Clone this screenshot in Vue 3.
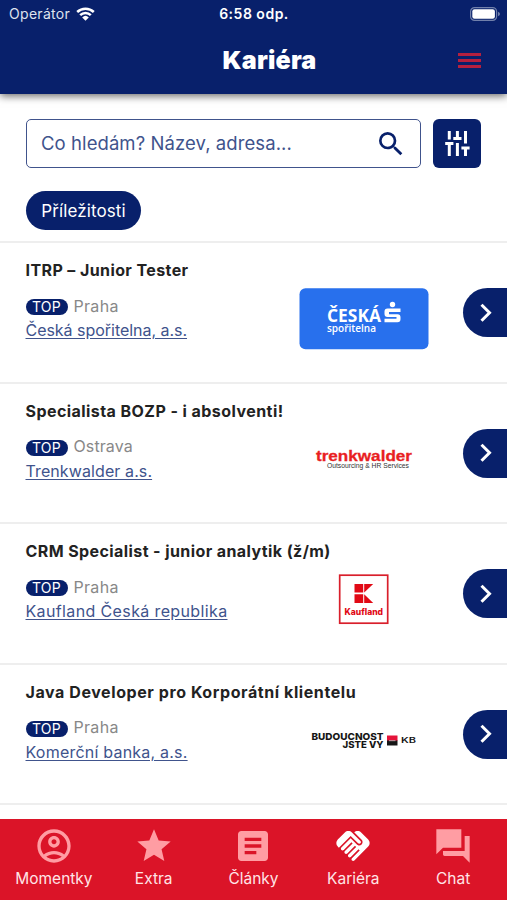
<script setup>
const jobs = [
  { title: 'ITRP – Junior Tester', ts: 0.4, city: 'Praha', cs: 0.3, company: 'Česká spořitelna, a.s.', ls: -0.03, logo: 'cs' },
  { title: 'Specialista BOZP - i absolventi!', ts: 0.44, city: 'Ostrava', cs: 0.1, company: 'Trenkwalder a.s.', ls: 0.1, logo: 'tw' },
  { title: 'CRM Specialist - junior analytik (ž/m)', ts: 0.41, city: 'Praha', cs: 0.3, company: 'Kaufland Česká republika', ls: 0.37, logo: 'kl' },
  { title: 'Java Developer pro Korporátní klientelu', ts: 0.58, city: 'Praha', cs: 0.3, company: 'Komerční banka, a.s.', ls: 0.22, logo: 'kb' },
]

const tabs = [
  { label: 'Momentky', icon: 'M12 2C6.48 2 2 6.48 2 12s4.48 10 10 10 10-4.48 10-10S17.52 2 12 2zM7.35 18.5C8.66 17.56 10.26 17 12 17s3.34.56 4.65 1.5C15.34 19.44 13.74 20 12 20s-3.34-.56-4.65-1.5zm10.79-1.38C16.45 15.8 14.32 15 12 15s-4.45.8-6.14 2.12C4.7 15.73 4 13.95 4 12c0-4.42 3.58-8 8-8s8 3.58 8 8c0 1.95-.7 3.73-1.86 5.12zM12 6c-1.93 0-3.5 1.57-3.5 3.5S10.07 13 12 13s3.5-1.57 3.5-3.5S13.93 6 12 6zm0 5c-.83 0-1.5-.67-1.5-1.5S11.17 8 12 8s1.5.67 1.5 1.5S12.83 11 12 11z' },
  { label: 'Extra', icon: 'M12 17.27 18.18 21l-1.64-7.03L22 9.24l-7.19-.61L12 2 9.19 8.63 2 9.24l5.46 4.73L5.82 21z' },
  { label: 'Články', icon: 'M19 3H5c-1.1 0-2 .9-2 2v14c0 1.1.9 2 2 2h14c1.1 0 2-.9 2-2V5c0-1.1-.9-2-2-2zm-5 14H7v-2h7v2zm3-4H7v-2h10v2zm0-4H7V7h10v2z' },
  { label: 'Kariéra', active: true, icon: 'M16.48 10.41c-.39.39-1.04.39-1.43 0l-4.47-4.46-7.05 7.04-.66-.63c-1.17-1.17-1.17-3.07 0-4.24l4.24-4.24c1.17-1.17 3.07-1.17 4.24 0L16.48 9c.39.39.39 1.02 0 1.41zM17.18 8.29c.78.78.78 2.05 0 2.83-1.27 1.27-2.61.22-2.83 0l-3.76-3.76-5.57 5.57c-.39.39-.39 1.02 0 1.41.39.39 1.02.39 1.42 0l4.62-4.62.71.71-4.62 4.62c-.39.39-.39 1.02 0 1.41.39.39 1.02.39 1.42 0l4.62-4.62.71.71-4.62 4.62c-.39.39-.39 1.02 0 1.41.39.39 1.02.39 1.41 0l4.62-4.62.71.71-4.62 4.62c-.39.39-.39 1.02 0 1.41.39.39 1.02.39 1.41 0l8.32-8.34c1.17-1.17 1.17-3.07 0-4.24l-4.24-4.24c-1.15-1.15-3.01-1.17-4.18-.06l4.47 4.47z' },
  { label: 'Chat', icon: 'M22 6h-3v9H6v2c0 .55.45 1 1 1h11l4 4V6zM17 2H2v15l4-4h11V2z' },
]
</script>

<template>
  <div class="screen">
    <header class="header">
      <div class="status">
        <div class="carrier">
          <span>Operátor</span>
          <svg width="19" height="14" viewBox="0 0 19 14" fill="none" stroke="#fff" stroke-width="2.5">
            <path d="M1.2 5a12 12 0 0 1 16.6 0M4.2 8.2a7.6 7.6 0 0 1 10.6 0" />
            <path d="M6.2 10.4a4.8 4.8 0 0 1 6.6 0L9.5 13.8z" fill="#fff" stroke="none" />
          </svg>
        </div>
        <div class="clock">6:58 odp.</div>
        <svg class="battery" width="31" height="14" viewBox="0 0 31 14">
          <rect x=".6" y=".6" width="26" height="12.8" rx="4" fill="none" stroke="#7180ab" stroke-width="1.2" />
          <rect x="2.3" y="2.3" width="22.6" height="9.4" rx="2.2" fill="#fff" />
          <path d="M28 4.8q2 .7 2 2.2t-2 2.2z" fill="#7180ab" />
        </svg>
      </div>
      <div class="titlebar">
        <h1>Kariéra</h1>
        <button class="menu"><i /><i /><i /></button>
      </div>
    </header>

    <section class="filters">
      <div class="searchrow">
        <div class="search">
          <span>Co hledám? Název, adresa...</span>
          <svg width="32" height="32" viewBox="0 0 24 24"><path fill="#08206b" d="M15.5 14h-.79l-.28-.27A6.47 6.47 0 0 0 16 9.5 6.5 6.5 0 1 0 9.5 16c1.61 0 3.09-.59 4.23-1.57l.27.28v.79l5 4.99L20.49 19zm-6 0a4.5 4.5 0 1 1 0-9 4.5 4.5 0 0 1 0 9z" /></svg>
        </div>
        <button class="tune">
          <svg width="25" height="25" viewBox="0 0 25 25" fill="none" stroke="#fff" stroke-width="3">
            <path d="M4.3 0v8.5M.2 12.5h8.2M4.3 12v13M12.4 0v8M8.3 7.5h8.2M12.4 12v13M20.5 0v12.5M16.4 17h8.2M20.5 17v8" />
          </svg>
        </button>
      </div>
      <span class="chip">Příležitosti</span>
    </section>

    <main class="jobs">
      <article v-for="job in jobs" :key="job.title" class="job">
        <h2 :style="{ letterSpacing: job.ts + 'px' }">{{ job.title }}</h2>
        <div class="body">
          <div class="info">
            <div class="place"><span class="top">TOP</span><span :style="{ letterSpacing: job.cs + 'px' }">{{ job.city }}</span></div>
            <a :style="{ letterSpacing: job.ls + 'px' }">{{ job.company }}</a>
          </div>
          <svg class="logo" width="130" height="62" viewBox="0 0 130 62">
            <g v-if="job.logo === 'cs'" fill="#fff">
              <rect x=".5" y=".2" width="129" height="61" rx="6" fill="#2870ed" />
              <text x="28" y="34" class="open" font-size="18" font-weight="700" textLength="54" lengthAdjust="spacingAndGlyphs">ČESKÁ</text>
              <text x="28" y="44.300" class="open" font-size="10.5" font-weight="600" textLength="49" lengthAdjust="spacingAndGlyphs">spořitelna</text>
              <circle cx="93.500" cy="16.500" r="2.700" />
              <path d="M88.500 20.500h13v3.500H90v2.200h8.500q3 0 3 3v2q0 3-3 3H85.500V30.700h12v-1.700h-9q-3 0-3-3v-2.500q0-3 3-3z" />
            </g>
            <g v-else-if="job.logo === 'tw'">
              <text x="17" y="31.500" class="lib" font-size="15.500" font-weight="700" fill="#e91e22" stroke="#e91e22" stroke-width=".3" textLength="96" lengthAdjust="spacingAndGlyphs">trenkwalder</text>
              <text x="28" y="38.500" class="lib" font-size="6.5" fill="#333" textLength="82" lengthAdjust="spacingAndGlyphs">Outsourcing &amp; HR Services</text>
            </g>
            <g v-else-if="job.logo === 'kl'" fill="#e10915">
              <rect x="40.700" y="6.200" width="48" height="48" fill="#fff" stroke="#d91f2b" stroke-width="1.700" />
              <path d="M55.500 15h8.700v8.500h-8.700zM65.200 15h9l-9 8.500zM55.500 25.300h8.700v8.700h-8.700zM65.200 25.300l9 8.700h-9z" />
              <text x="45.500" y="46" class="inter" font-size="8.500" font-weight="800" textLength="38.500" lengthAdjust="spacingAndGlyphs">Kaufland</text>
            </g>
            <g v-else fill="#161616">
              <text x="12.500" y="29.500" class="inter" font-size="9.500" font-weight="800" textLength="72" lengthAdjust="spacingAndGlyphs">BUDOUCNOST</text>
              <text x="43.500" y="38" class="inter" font-size="9.500" font-weight="800" textLength="41" lengthAdjust="spacingAndGlyphs">JSTE VY</text>
              <path d="M88 25.500h10.500v5.500H88z" fill="#e5143a" />
              <path d="M88 30.500h10.500v5H88z" />
              <path d="M90 30.700h6.500" stroke="#fff" stroke-width=".6" />
              <text x="102" y="32.800" class="inter" font-size="7" font-weight="600" textLength="15" lengthAdjust="spacingAndGlyphs">KB</text>
            </g>
          </svg>
          <button class="go">
            <svg width="12" height="20" viewBox="0 0 12 20" fill="none" stroke="#fff" stroke-width="3"><path d="M1.500 1.700l8 8-8 8" /></svg>
          </button>
        </div>
      </article>
    </main>

    <nav class="tabs">
      <div v-for="tab in tabs" :key="tab.label" class="tab" :class="{ active: tab.active }">
        <svg width="40" height="40" viewBox="0 0 24 24"><path :d="tab.icon" /></svg>
        <span>{{ tab.label }}</span>
      </div>
    </nav>
  </div>
</template>

<style>
body { margin: 0; overflow: hidden; }
</style>

<style scoped>
.screen { width: 507px; height: 900px; display: flex; flex-direction: column; overflow: hidden; background: #fff; font-family: Inter, "Liberation Sans", sans-serif; color: #222; }
button { border: 0; padding: 0; margin: 0; display: flex; align-items: center; justify-content: center; }
svg { display: block; flex: none; }
.header { flex: none; height: 94px; background: #08206b; color: #fff; box-shadow: 0 2px 8px rgba(0, 0, 0, .6); }
.status { display: grid; grid-template-columns: 1fr auto 1fr; align-items: center; height: 27px; padding: 0 6px 0 7px; font-size: 14px; }
.carrier { display: flex; align-items: center; gap: 6px; padding-left: 2px; color: #dfe3ee; letter-spacing: .3px; }
.clock { font-weight: 600; letter-spacing: .5px; }
.battery { justify-self: end; }
.titlebar { display: grid; grid-template-columns: 1fr auto 1fr; align-items: center; height: 66px; padding: 0 26px 0 58px; }
h1 { grid-column: 2; margin: 0; font-size: 25px; line-height: 30px; font-weight: 900; letter-spacing: .2px; }
.menu { justify-self: end; flex-direction: column; gap: 3px; background: none; }
.menu i { width: 23px; height: 3px; background: #b5203f; }
.filters { flex: none; height: 147px; box-sizing: border-box; padding: 25px 26px 0; }
.searchrow { display: flex; gap: 12px; }
.search { flex: none; box-sizing: border-box; width: 395px; height: 49px; border: 1.500px solid #40538c; border-radius: 5px; padding: 0 13px 0 14px; display: flex; align-items: center; justify-content: space-between; color: #40538c; font-size: 18.500px; letter-spacing: .08px; }
.search span { margin-bottom: 2px; }
.tune { width: 49px; height: 49px; border-radius: 6px; background: #08206b; }
.chip { display: flex; align-items: center; justify-content: center; width: 115px; height: 39px; margin-top: 23px; border-radius: 20px; background: #08206b; color: #fff; font-size: 17px; letter-spacing: .1px; }
.jobs { flex: 1; min-height: 0; overflow: hidden; }
.job { height: 140.600px; box-sizing: border-box; border-top: 2px solid #eee; padding: 16px 0 0 25.500px; }
.job:last-child { height: 142.600px; border-bottom: 2px solid #eee; }
h2 { margin: 0; font-size: 16px; line-height: 22px; font-weight: 700; white-space: nowrap; }
.body { display: flex; align-items: flex-start; padding-top: 7px; }
.info { width: 273px; padding-top: 7px; white-space: nowrap; }
.place { display: flex; align-items: center; height: 21px; gap: 6px; color: #888; font-size: 16px; }
.top { width: 42px; height: 16px; margin-top: 3px; border-radius: 8px; background: #08206b; color: #fff; font-size: 14px; line-height: 16px; text-align: center; letter-spacing: .3px; }
a { display: inline-block; margin-top: 3px; font-size: 16px; line-height: 22px; color: #40538c; text-decoration: underline; text-underline-offset: 2px; }
.go { width: 44px; height: 49px; margin-left: auto; border-radius: 25px 0 0 25px; background: #08206b; }
.go svg { margin-left: 2px; }
.open { font-family: "Open Sans", sans-serif; }
.lib { font-family: "Liberation Sans", sans-serif; }
.inter { font-family: Inter, sans-serif; }
.tabs { flex: none; height: 81px; box-sizing: border-box; padding: 7px 4px 0; display: grid; grid-template-columns: repeat(5, 1fr); background: #db1428; color: #fff; }
.tab { display: flex; flex-direction: column; align-items: center; font-size: 15.500px; line-height: 25px; color: #ffe4e6; }
.tab svg { fill: #ff9da3; }
.tab.active svg { fill: #fff; }
</style>
